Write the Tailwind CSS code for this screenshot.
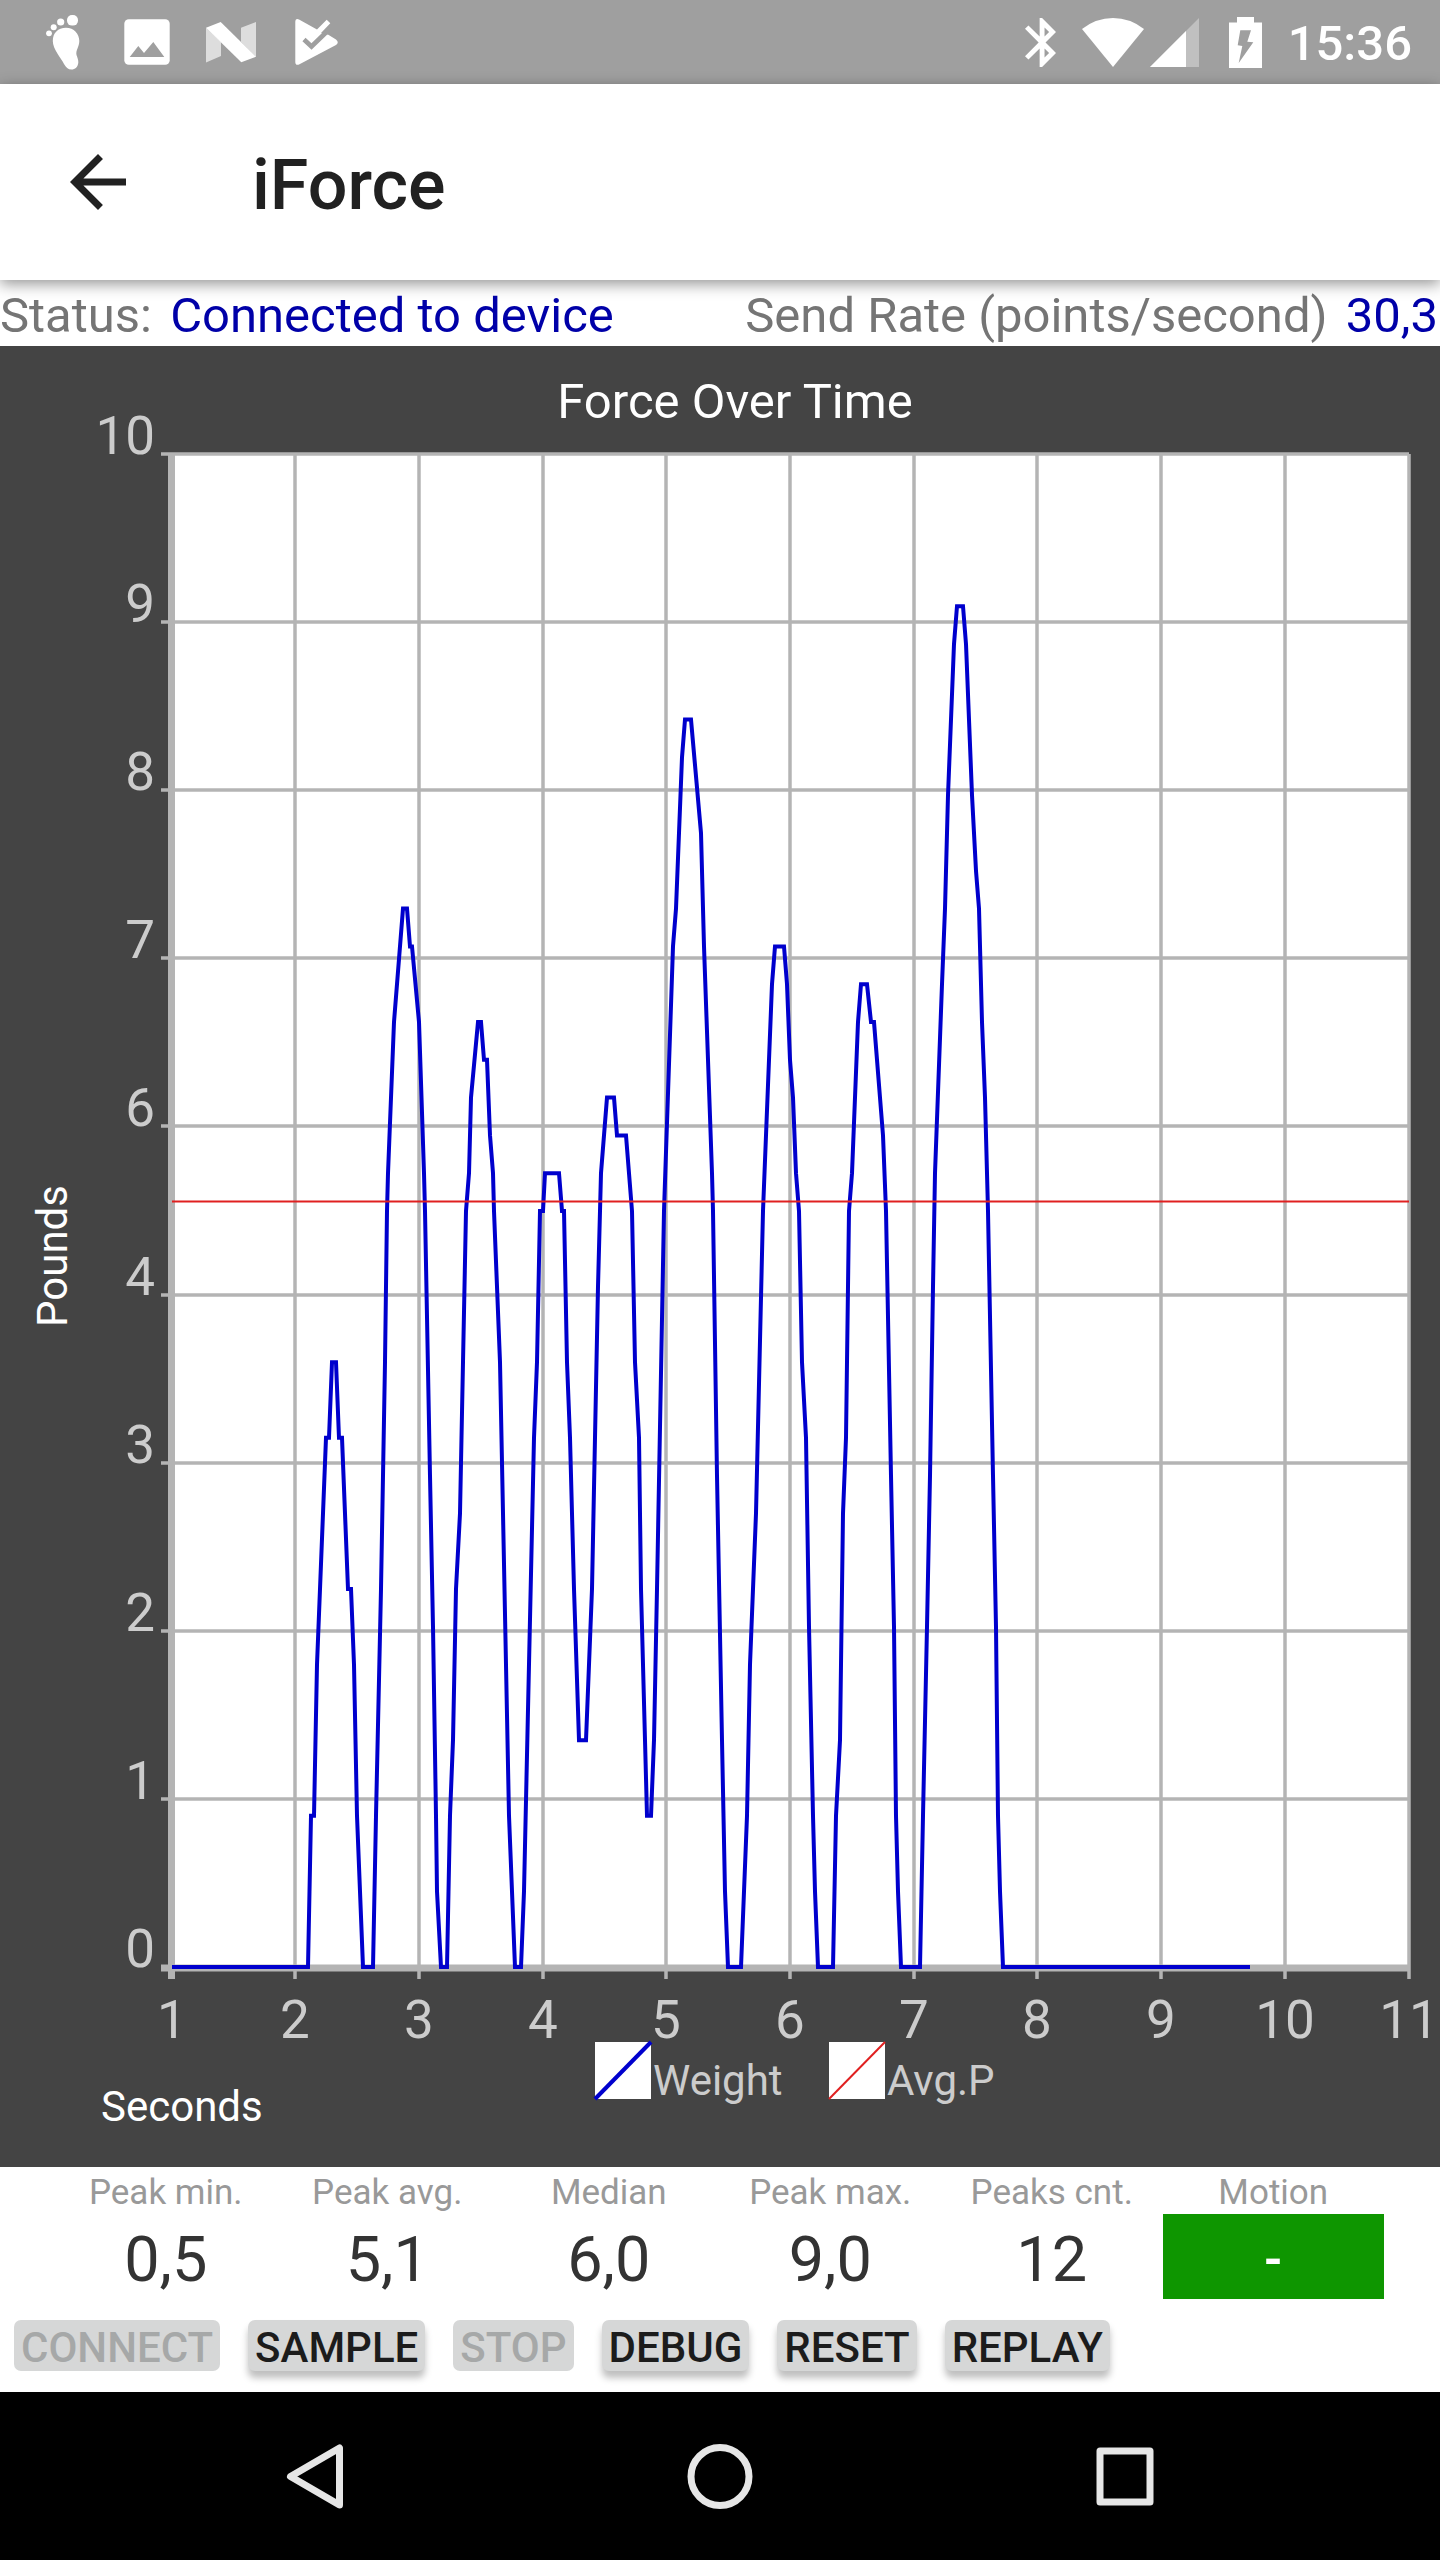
<!DOCTYPE html>
<html lang="en">
<head>
    <meta charset="UTF-8">
    <meta name="viewport" content="width=device-width, initial-scale=1.0">
    <title>iForce</title>
    <script src="https://cdn.jsdelivr.net/npm/@tailwindcss/browser@4"></script>
</head>
<body class="bg-white font-[Roboto,sans-serif]">
<div class="flex min-h-screen flex-col">

    <!-- system status bar -->
    <div class="flex h-21 items-center justify-between bg-[#9f9f9f] pl-[21px] pr-7 text-white">
        <div class="flex">
            <svg class="size-21" viewBox="0 0 84 84" fill="currentColor">
                <rect x="46" y="15" width="11" height="10.6" rx="5"/>
                <circle cx="39.7" cy="22" r="3.6"/>
                <circle cx="32.7" cy="27.3" r="3"/>
                <circle cx="28" cy="33.3" r="2.9"/>
                <path d="M31.8 41C31.8 33 37 27.7 45 27.7S58.3 34 58.3 41C58.3 47 54.5 50 55.5 55C56.5 58 57.5 60 57.3 62.5C57 67 54 69.5 50.5 69.5C47 69.5 45 67.5 43 64C40 58 31.8 49 31.8 41Z"/>
            </svg>
            <svg class="size-21" viewBox="0 0 84 84">
                <rect x="19.3" y="19.3" width="45.4" height="45.4" rx="4.5" fill="#fff"/>
                <path d="M24.7 57L33.3 46L39 53L48.3 42L59.3 57Z" fill="#9f9f9f"/>
            </svg>
            <svg class="size-21" viewBox="0 0 84 84" fill="currentColor">
                <path d="M17 27.7L32 42V56L17 62.5ZM52 27.7L67 22V57L52 42Z" opacity=".65"/>
                <path d="M17 27.7L31.7 22L67 56.7L52.3 62.3Z"/>
            </svg>
            <svg class="size-21" viewBox="0 0 84 84">
                <path d="M22.3 22Q22.3 18 26 19.5L44 29.5L53.7 19.7L57.3 23.3L48 33L55.3 34.7L63 39.5Q66.5 42.3 63 45L26.5 64.3Q22.3 66 22.3 62Z" fill="#fff"/>
                <path d="M31 39.5L38.5 46.5L53.5 32" fill="none" stroke="#9f9f9f" stroke-width="4.6"/>
            </svg>
        </div>
        <div class="flex items-center">
            <svg class="h-[49px] w-[31px]" viewBox="5 2 12.7 20" fill="currentColor">
                <path d="M17.71 7.71L12 2h-1v7.59L6.41 5 5 6.41 10.59 12 5 17.59 6.41 19 11 14.41V22h1l5.71-5.71-4.3-4.29 4.3-4.29zM13 5.83l1.88 1.88L13 9.59V5.83zm1.88 10.46L13 18.17v-3.76l1.88 1.88z"/>
            </svg>
            <svg class="ml-[26px] h-[49px] w-[62px]" viewBox="0 0 62 49" fill="currentColor">
                <path d="M31 49L0 11Q14 0 31 0T62 11Z"/>
            </svg>
            <svg class="ml-1.5 size-[49px]" viewBox="0 0 49 49" fill="currentColor">
                <path d="M0 49L49 0V49Z" opacity=".35"/>
                <path d="M0 49L36 13V49Z"/>
            </svg>
            <svg class="ml-[30px] h-[51px] w-[33px]" viewBox="0 0 33 51">
                <path d="M0 5.5H8V0H25V5.5H33V51H0Z" fill="#fff"/>
                <path d="M11.3 13.3H22L18.3 24.7L24.3 25.3L9.7 46L13.3 29L8.7 28.3Z" fill="#9f9f9f"/>
            </svg>
            <span class="ml-[26px] pt-1 text-[49px] leading-14 font-medium">15:36</span>
        </div>
    </div>

    <!-- app bar -->
    <header class="relative flex h-49 items-center bg-white pl-14 text-[#212121] shadow-[0_4px_14px_rgba(0,0,0,0.42)]">
        <a href="#" aria-label="Back">
            <svg class="size-21" viewBox="0 0 24 24" fill="currentColor">
                <path d="M20 11H7.83l5.59-5.59L12 4l-8 8 8 8 1.41-1.41L7.83 13H20v-2z"/>
            </svg>
        </a>
        <h1 class="ml-28 pt-1.5 text-[70px] leading-20 font-medium">iForce</h1>
    </header>

    <div class="flex justify-between pt-1.5 pr-0.5 text-[49px] leading-15 text-[#757575]">
        <p>Status: <span class="ml-1.5 text-[#0000a8]">Connected to device</span></p>
        <p>Send Rate (points/second) <span class="ml-1.5 text-[#0000a8]">30,3</span></p>
    </div>

    <!-- chart -->
    <svg class="block w-full bg-[#444]" viewBox="0 346 1440 1821" fill="#ccc" role="img" aria-label="Force Over Time">
        <text x="735" y="418" font-size="49" fill="#fff" text-anchor="middle">Force Over Time</text>
        <rect x="172" y="454" width="1237" height="1514" fill="#fff"/>
        <g id="grid" stroke="#b4b4b4" stroke-width="3.5"></g>
        <path d="M171.5 453V1979M161 1968H1409" stroke="#b4b4b4" stroke-width="7"/>
        <polyline id="weight" fill="none" stroke="#0000cd" stroke-width="4"/>
        <path d="M172 1201.5H1409" stroke="#e02020" stroke-width="2"/>
        <g id="y-labels" font-size="53" text-anchor="end"></g>
        <g id="x-labels" font-size="53" text-anchor="middle"></g>
        <text transform="translate(67 1256) rotate(-90)" font-size="42" fill="#fff" text-anchor="middle">Pounds</text>
        <text x="101" y="2121" font-size="42" fill="#fff">Seconds</text>
        <rect x="595" y="2042" width="56" height="57" fill="#fff"/>
        <path d="M595 2099L651 2042" stroke="#0000cd" stroke-width="4"/>
        <text x="653" y="2095" font-size="42">Weight</text>
        <rect x="829" y="2042" width="56" height="57" fill="#fff"/>
        <path d="M829 2099L885 2042" stroke="#e02020" stroke-width="2"/>
        <text x="887" y="2095" font-size="42">Avg.P</text>
    </svg>

    <!-- peak statistics -->
    <dl class="grid grid-cols-6 pl-[55px] pr-14 text-center text-[63px] text-[#333]">
        <div>
            <dt class="pt-1 text-[35px] leading-[43px] text-[#999]">Peak min.</dt>
            <dd class="pt-1.5 leading-[79px]">0,5</dd>
        </div>
        <div>
            <dt class="pt-1 text-[35px] leading-[43px] text-[#999]">Peak avg.</dt>
            <dd class="pt-1.5 leading-[79px]">5,1</dd>
        </div>
        <div>
            <dt class="pt-1 text-[35px] leading-[43px] text-[#999]">Median</dt>
            <dd class="pt-1.5 leading-[79px]">6,0</dd>
        </div>
        <div>
            <dt class="pt-1 text-[35px] leading-[43px] text-[#999]">Peak max.</dt>
            <dd class="pt-1.5 leading-[79px]">9,0</dd>
        </div>
        <div>
            <dt class="pt-1 text-[35px] leading-[43px] text-[#999]">Peaks cnt.</dt>
            <dd class="pt-1.5 leading-[79px]">12</dd>
        </div>
        <div>
            <dt class="pt-1 text-[35px] leading-[43px] text-[#999]">Motion</dt>
            <dd class="bg-[#0e9600] pt-1.5 text-[49px] leading-[79px] font-bold text-white">-</dd>
        </div>
    </dl>

    <div class="flex gap-7 px-3.5 pt-[21px] pb-[21px] text-[42px] leading-[47px] font-medium text-[#1c1c1c]">
        <button disabled class="rounded-[7px] bg-[#d6d7d7] px-[7px] pt-1 text-[#a6a8a8]">CONNECT</button>
        <button class="rounded-[7px] bg-[#d6d7d7] px-[7px] pt-1 shadow-[0_7px_7px_rgba(0,0,0,0.25)]">SAMPLE</button>
        <button disabled class="rounded-[7px] bg-[#d6d7d7] px-[7px] pt-1 text-[#a6a8a8]">STOP</button>
        <button class="rounded-[7px] bg-[#d6d7d7] px-[7px] pt-1 shadow-[0_7px_7px_rgba(0,0,0,0.25)]">DEBUG</button>
        <button class="rounded-[7px] bg-[#d6d7d7] px-[7px] pt-1 shadow-[0_7px_7px_rgba(0,0,0,0.25)]">RESET</button>
        <button class="rounded-[7px] bg-[#d6d7d7] px-[7px] pt-1 shadow-[0_7px_7px_rgba(0,0,0,0.25)]">REPLAY</button>
    </div>

    <!-- system navigation -->
    <nav class="grid grow grid-cols-3 place-items-center bg-black px-28 text-[#e6e6e6]">
        <button aria-label="Back">
            <svg class="size-21" viewBox="0 0 84 84" fill="none" stroke="currentColor" stroke-width="7" stroke-linejoin="round">
                <path d="M66.5 14V71L17.5 42.5Z"/>
            </svg>
        </button>
        <button aria-label="Home">
            <svg class="size-21" viewBox="0 0 84 84" fill="none" stroke="currentColor" stroke-width="7">
                <circle cx="42" cy="42.5" r="29"/>
            </svg>
        </button>
        <button aria-label="Recent apps">
            <svg class="size-21" viewBox="0 0 84 84" fill="none" stroke="currentColor" stroke-width="7" stroke-linejoin="round">
                <rect x="17" y="17" width="50" height="51"/>
            </svg>
        </button>
    </nav>
</div>

<script>
    // sensor samples: [chart x, raw sensor step]
    const samples = [
        [172, 0], [308, 0], [311, 4], [314, 4], [317, 8], [326, 14], [329, 14], [332, 16], [336, 16], [339, 14],
        [342, 14], [348, 10], [351, 10], [354, 8], [357, 4], [363, 0],
        [373, 0], [376, 4], [381, 10], [385, 16], [387, 20], [388, 21], [394, 25], [403, 28], [407, 28], [410, 27],
        [412, 27], [419, 25], [424, 21], [425, 20], [430, 13], [433, 9], [436, 4], [437, 2], [441, 0],
        [447, 0], [450, 4], [453, 6], [456, 10], [460, 12], [466, 20], [469, 21], [471, 23], [478, 25], [481, 25],
        [484, 24], [487, 24], [490, 22], [493, 21], [494, 20], [500, 16], [503, 12], [509, 4], [515, 0],
        [521, 0], [524, 2], [534, 14], [537, 16], [540, 20], [543, 20], [545, 21], [559, 21], [562, 20], [564, 20],
        [567, 16], [570, 14], [574, 10], [579, 6],
        [586, 6], [592, 10], [598, 18], [600, 20], [601, 21], [607, 23], [614, 23], [617, 22], [626, 22], [632, 20],
        [635, 16], [639, 14], [641, 10], [645, 6], [647, 4],
        [651, 4], [654, 6], [657, 10], [664, 20], [673, 27], [676, 28], [682, 32], [685, 33], [691, 33], [701, 30],
        [704, 27], [712, 21], [713, 20], [717, 13], [722, 6], [725, 2], [728, 0],
        [741, 0], [747, 4], [750, 8], [756, 12], [763, 20], [772, 26], [775, 27], [784, 27], [787, 26], [790, 24],
        [793, 23], [796, 21], [799, 20], [802, 16], [806, 14], [809, 9], [813, 4], [815, 2], [818, 0],
        [833, 0], [836, 4], [840, 6], [843, 12], [846, 14], [849, 20], [852, 21], [858, 25], [861, 26], [867, 26],
        [871, 25], [874, 25], [883, 22], [886, 20], [891, 13], [894, 9], [896, 4], [898, 2], [901, 0],
        [920, 0], [923, 4], [927, 9], [930, 13], [933, 18], [935, 21], [942, 26], [945, 28], [948, 31], [954, 35],
        [957, 36], [963, 36], [966, 35], [972, 31], [976, 29], [979, 28], [982, 25], [985, 23], [988, 20],
        [993, 13], [996, 9], [998, 4], [1000, 2], [1003, 0], [1250, 0]
    ];
    const yLabels = ['10', '9', '8', '7', '6', '4', '3', '2', '1', '0'];

    document.getElementById('weight').setAttribute('points',
        samples.map(([x, step]) => `${x},${1967 - step * 37.8}`).join(' '));

    let grid = '';
    let yText = '';
    let xText = '';
    yLabels.forEach((label, i) => {
        const y = Math.round(454 + i * 168.1);
        if (label !== '0') grid += `<path d="M161 ${y}H1409"/>`;
        yText += `<text x="155" y="${y}">${label}</text>`;
    });
    for (let i = 0; i <= 10; i++) {
        const x = Math.round(171.8 + i * 123.67);
        grid += `<path d="M${x} 454V1979"/>`;
        xText += `<text x="${x}" y="2038">${i + 1}</text>`;
    }
    document.getElementById('grid').innerHTML = grid;
    document.getElementById('y-labels').innerHTML = yText;
    document.getElementById('x-labels').innerHTML = xText;
</script>
</body>
</html>
